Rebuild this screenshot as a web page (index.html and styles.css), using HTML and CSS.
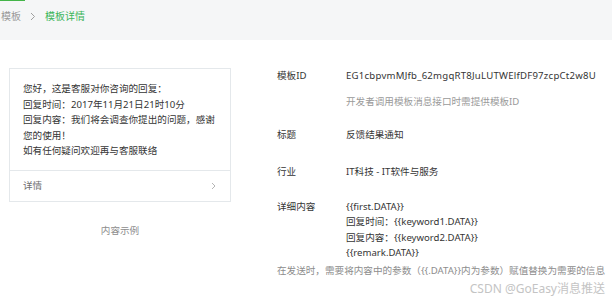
FILE: index.html
```html
<!DOCTYPE html>
<html lang="zh-CN">
<head>
  <meta charset="UTF-8" />
  <title>模板详情</title>
  <link rel="stylesheet" href="styles.css">
</head>
<body>

  <div class="top_bar">
    <div class="tab_line"></div>
    <div class="crumbs">
      <span class="crumb">模板</span>
      <svg class="crumb_arrow" width="6" height="9" viewBox="0 0 6 9"><polyline points="1,1 4.5,4.5 1,8" fill="none" stroke="#a0a0a0" stroke-width="1"/></svg>
      <span class="crumb current">模板详情</span>
    </div>
  </div>

  <div class="main">
    <div class="preview">
      <div class="card">
        <div class="card_body">
          您好，这是客服对你咨询的回复：<br>
          回复时间：2017年11月21日21时10分<br>
          回复内容：我们将会调查你提出的问题，感谢<br>
          您的使用！<br>
          如有任何疑问欢迎再与客服联络
        </div>
        <div class="card_foot">
          <span>详情</span>
          <svg width="5" height="8" viewBox="0 0 5 8"><polyline points="1,1 4,4 1,7" fill="none" stroke="#b5b5b5" stroke-width="1"/></svg>
        </div>
      </div>
      <div class="preview_caption">内容示例</div>
    </div>

    <div class="details">
      <div class="row">
        <div class="label">模板ID</div>
        <div class="value template_id">EG1cbpvmMJfb_62mgqRT8JuLUTWElfDF97zcpCt2w8U</div>
      </div>
      <div class="row hint_row">
        <div class="label"></div>
        <div class="value hint">开发者调用模板消息接口时需提供模板ID</div>
      </div>
      <div class="row title_row">
        <div class="label">标题</div>
        <div class="value">反馈结果通知</div>
      </div>
      <div class="row trade_row">
        <div class="label">行业</div>
        <div class="value">IT科技 - IT软件与服务</div>
      </div>
      <div class="row content_row">
        <div class="label">详细内容</div>
        <div class="value lines">
          {{first.DATA}}<br>
          回复时间：{{keyword1.DATA}}<br>
          回复内容：{{keyword2.DATA}}<br>
          {{remark.DATA}}
        </div>
      </div>
      <div class="note">在发送时，需要将内容中的参数（{{.DATA}}内为参数）赋值替换为需要的信息</div>
    </div>
  </div>

  <div class="watermark">CSDN @GoEasy消息推送</div>

</body>
</html>
```

FILE: styles.css
```css
body {
  margin: 0;
  padding: 0;
  background-color: #ffffff;
  font-family: "Noto Sans", "Noto Sans CJK SC", sans-serif;
  font-size: 9.6px;
  line-height: 16px;
  color: #353535;
  overflow: hidden;
}

.top_bar {
  background-color: #f5f6f7;
  height: 40px;
}

.tab_line {
  width: 25px;
  height: 1px;
  background-color: #44b549;
}

.crumbs {
  display: flex;
  align-items: center;
  margin-top: 7px;
  padding-left: 1px;
  font-size: 10px;
}

.crumb {
  color: #9a9a9a;
}

.crumb.current {
  color: #3bb55a;
}

.crumb_arrow {
  margin: 0 9px 0 9px;
}

.main {
  display: flex;
  padding-top: 28px;
}

.preview {
  width: 222px;
  margin-left: 9px;
}

.card {
  border: 1px solid #e4e8eb;
  background: white;
}

.card_body {
  padding: 12px 13px 11px 13px;
  line-height: 15.6px;
  white-space: nowrap;
}

.card_foot {
  border-top: 1px solid #e4e8eb;
  height: 30px;
  display: flex;
  align-items: center;
  justify-content: space-between;
  padding: 0 14px 0 13px;
  color: #6f6f6f;
}

.preview_caption {
  margin-top: 21px;
  text-align: center;
  color: #8d8d8d;
}

.details {
  margin-left: 46px;
}

.row {
  display: flex;
}

.label {
  width: 69px;
  flex-shrink: 0;
}

.value {
  white-space: nowrap;
}

.template_id {
  letter-spacing: 0.23px;
}

.hint_row {
  margin-top: 10px;
}

.hint {
  color: #9a9a9a;
}

.title_row {
  margin-top: 17px;
}

.trade_row {
  margin-top: 21px;
}

.content_row {
  margin-top: 19px;
}

.lines {
  line-height: 15.4px;
}

.note {
  margin-top: 2px;
  color: #8d8d8d;
  white-space: nowrap;
}

.watermark {
  position: absolute;
  right: 7px;
  bottom: 4px;
  font-size: 12px;
  line-height: 16px;
  color: #c4c4c4;
}
```
